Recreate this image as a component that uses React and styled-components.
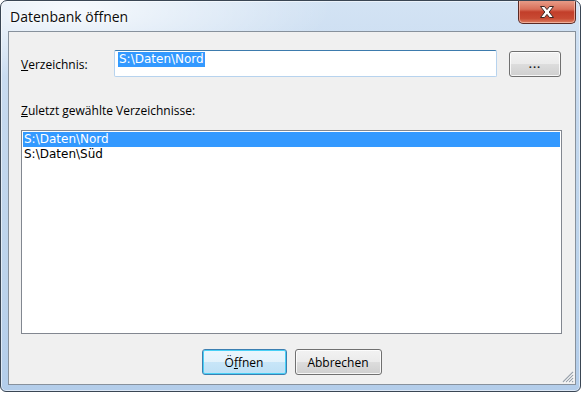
import React from 'react';
import styled, { createGlobalStyle } from 'styled-components';

const GlobalStyle = createGlobalStyle`
  html, body {
    margin: 0;
    padding: 0;
    background: #ffffff;
  }
  * {
    box-sizing: border-box;
  }
`;

const Window = styled.div`
  position: relative;
  width: 581px;
  height: 392px;
  border: 1px solid #3a4654;
  border-radius: 7px 7px 6px 6px;
  overflow: hidden;
  display: flex;
  flex-direction: column;
  background:
    radial-gradient(ellipse 260px 70px at 70px 8px, rgba(255, 255, 255, 0.8), rgba(255, 255, 255, 0) 100%),
    linear-gradient(180deg, #d3e3f4 0%, #c4d8ee 30%, #bcd3eb 70%, #b3cdea 100%);
  box-shadow: inset 0 0 0 1px rgba(255, 255, 255, 0.55);
`;

const TitleBar = styled.div`
  height: 30px;
  flex: none;
  display: flex;
  align-items: flex-start;
`;

const Title = styled.div`
  padding: 6px 0 0 9px;
  font-family: 'Open Sans', 'Noto Sans', sans-serif;
  font-size: 14px;
  line-height: 19px;
  color: #0b0b0b;
  text-shadow: 0 0 6px #ffffff, 0 0 3px #ffffff;
`;

const CloseButton = styled.div`
  margin: -1px 4px 0 auto;
  width: 58px;
  height: 24px;
  border: 1px solid #5a2a25;
  border-top: none;
  border-radius: 0 0 5px 5px;
  display: flex;
  align-items: center;
  justify-content: center;
  background: linear-gradient(180deg, #e9a08c 0%, #d9705a 40%, #c23e2a 52%, #c84a33 80%, #dc7f62 100%);
  box-shadow: inset 0 0 0 1px rgba(255, 210, 195, 0.6);
`;

const Client = styled.div`
  flex: none;
  margin: 0 4px 0 7px;
  width: 568px;
  height: 354px;
  border: 1px solid #87919c;
  background: #f0f0f0;
  padding: 18px 13px 0 12px;
  display: flex;
  flex-direction: column;
  position: relative;
  font-family: 'Open Sans', 'Noto Sans', sans-serif;
  font-size: 12px;
  color: #000;
`;

const DirRow = styled.div`
  display: flex;
  align-items: center;
  height: 27px;
`;

const FieldLabel = styled.label`
  width: 93px;
  flex: none;
  line-height: 15px;
  padding-top: 1px;
`;

const PathInput = styled.div`
  width: 383px;
  height: 27px;
  flex: none;
  background: #ffffff;
  border: 1px solid #b7d3ee;
  border-top-color: #3d7bad;
  border-radius: 2px;
  padding: 1px 0 0 3px;
  display: flex;
  align-items: flex-start;
`;

const Selection = styled.span`
  background: #3399ff;
  color: #ffffff;
  font-family: 'DejaVu Sans', 'Liberation Sans', sans-serif;
  font-size: 12px;
  line-height: 15px;
  padding: 0 1px;
`;

const PushButton = styled.div`
  width: ${p => p.$width}px;
  height: 26px;
  flex: none;
  display: flex;
  align-items: center;
  justify-content: center;
  border: 1px solid ${p => (p.$default ? '#3c7fb1' : '#707070')};
  border-radius: 3px;
  background: ${p =>
    p.$default
      ? 'linear-gradient(180deg, #eaf6fd 0%, #e3f2fb 48%, #c8e6f8 50%, #bee0f5 100%)'
      : 'linear-gradient(180deg, #f2f2f2 0%, #ebebeb 48%, #dddddd 50%, #cfcfcf 100%)'};
  box-shadow: inset 0 0 0 1px ${p => (p.$default ? '#48d0f6' : 'rgba(255,255,255,0.8)')};
  line-height: 15px;
  color: #000;
`;

const BrowseButton = styled(PushButton)`
  margin-left: 12px;
  margin-top: 1px;
  font-weight: bold;
  letter-spacing: 1px;
  font-size: 11px;
  color: #1b1b1b;
  padding-bottom: 2px;
`;

const SectionLabel = styled.label`
  margin-top: 26px;
  line-height: 15px;
`;

const ListBox = styled.div`
  margin-top: 12px;
  width: 541px;
  height: 204px;
  border: 1px solid #828790;
  background: #ffffff;
  padding: 1px;
`;

const ListItem = styled.div`
  height: 15px;
  line-height: 15px;
  padding-left: 1px;
  font-family: 'DejaVu Sans', 'Liberation Sans', sans-serif;
  font-size: 12px;
  background: ${p => (p.$selected ? '#3399ff' : 'transparent')};
  color: ${p => (p.$selected ? '#ffffff' : '#000000')};
`;

const ButtonRow = styled.div`
  margin-top: 15px;
  display: flex;
  justify-content: center;
  gap: 8px;
`;

const Grip = styled.svg`
  position: absolute;
  right: 1px;
  bottom: 1px;
`;

function CloseGlyph() {
  return (
    <svg width="16" height="14" viewBox="0 0 16 14">
      <path
        d="M1.5 1.5 L5.5 1.5 L8 4.6 L10.5 1.5 L14.5 1.5 L10.2 7 L14.5 12.5 L10.5 12.5 L8 9.4 L5.5 12.5 L1.5 12.5 L5.8 7 Z"
        fill="#ffffff"
        stroke="#3d2724"
        strokeWidth="1"
        strokeLinejoin="round"
      />
    </svg>
  );
}

export default function App() {
  return (
    <>
      <GlobalStyle />
      <Window>
        <TitleBar>
          <Title>Datenbank öffnen</Title>
          <CloseButton>
            <CloseGlyph />
          </CloseButton>
        </TitleBar>
        <Client>
          <DirRow>
            <FieldLabel><u>V</u>erzeichnis:</FieldLabel>
            <PathInput>
              <Selection>S:\Daten\Nord</Selection>
            </PathInput>
            <BrowseButton $width={52}>...</BrowseButton>
          </DirRow>
          <SectionLabel><u>Z</u>uletzt gewählte Verzeichnisse:</SectionLabel>
          <ListBox>
            <ListItem $selected>S:\Daten\Nord</ListItem>
            <ListItem>S:\Daten\Süd</ListItem>
          </ListBox>
          <ButtonRow>
            <PushButton $width={85} $default>Ö<u>f</u>fnen</PushButton>
            <PushButton $width={87}>Abbrechen</PushButton>
          </ButtonRow>
          <Grip width="14" height="14" viewBox="0 0 14 14">
            <path d="M13 3 L3 13 M13 6 L6 13 M13 9 L9 13 M13 12 L12 13" stroke="#9aa3ad" strokeWidth="1.2" />
            <path d="M13.8 3.8 L3.8 13.8 M13.8 6.8 L6.8 13.8 M13.8 9.8 L9.8 13.8" stroke="#ffffff" strokeWidth="0.8" />
          </Grip>
        </Client>
      </Window>
    </>
  );
}
